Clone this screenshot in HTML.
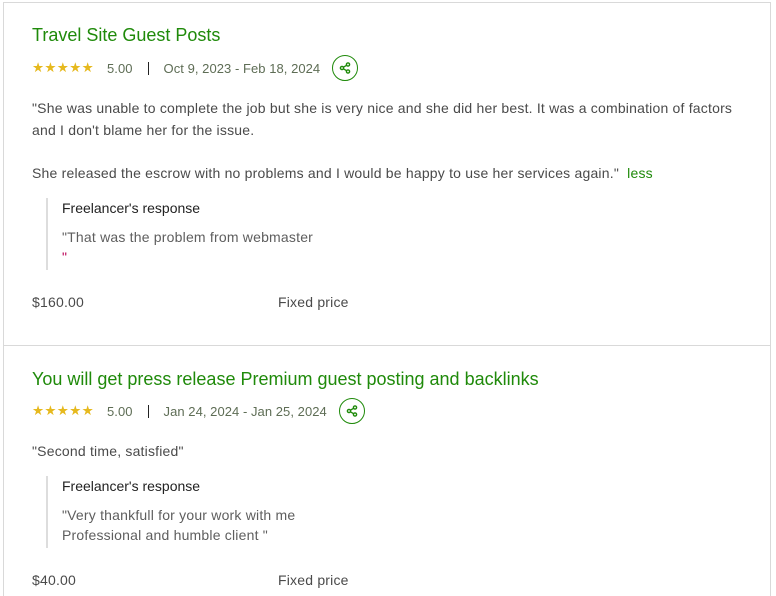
<!DOCTYPE html>
<html><head><style>
html,body{margin:0;background:#fff;font-family:"Liberation Sans",sans-serif;width:776px;height:596px;overflow:hidden;position:relative}
.box{position:absolute;left:3px;top:2px;width:766px;height:594px;border-left:1px solid #d9d9d9;border-right:1px solid #d9d9d9;border-top:1px solid #d9d9d9}
.sep{position:absolute;left:3px;width:767px;top:345px;height:1px;background:#d9d9d9}
.t{position:absolute;left:32px;color:#1f8a0a;font-size:18px}
.meta{position:absolute;left:32px;font-size:13px;color:#5e6d55;display:flex;align-items:center;letter-spacing:0.05px}
.stars{color:#e6b91e;font-size:13.5px;letter-spacing:0.3px;margin-right:13px}
.bar{width:1px;height:13px;background:#222;margin:0 15px}
.share{width:26px;height:26px;border:1.5px solid #1f8a0a;border-radius:50%;box-sizing:border-box;display:flex;align-items:center;justify-content:center;margin-left:12px}
.p{position:absolute;left:32px;font-size:14px;color:#4a4a4a;line-height:22px;letter-spacing:0.2px}
.resp{position:absolute;left:46px;border-left:2px solid #ddd;padding-left:14px}
.resp .h{font-size:14px;color:#222}
.resp .b{font-size:14px;color:#5e5e5e;line-height:20px;margin-top:11px;letter-spacing:0.2px}
.price{position:absolute;font-size:14px;color:#4a4a4a;letter-spacing:0.2px}
</style></head><body>
<div class="box"></div>
<div class="sep"></div>
<div class="t" style="top:25px">Travel Site Guest Posts</div>
<div class="meta" style="top:55px"><span class="stars">★★★★★</span>5.00<span class="bar"></span>Oct 9, 2023 - Feb 18, 2024<span class="share"><svg width="12" height="12" viewBox="0 0 12 12" fill="none" stroke="#1f8a0a" stroke-width="1.4"><circle cx="9" cy="2.5" r="1.6"/><circle cx="3" cy="6" r="1.6"/><circle cx="9" cy="9.5" r="1.6"/><path d="M4.4 5.2L7.6 3.3M4.4 6.8L7.6 8.7"/></svg></span></div>
<div class="p" style="top:97px">"She was unable to complete the job but she is very nice and she did her best. It was a combination of factors<br>and I don't blame her for the issue.</div>
<div class="p" style="top:162px">She released the escrow with no problems and I would be happy to use her services again."&nbsp; <span style="color:#1f8a0a">less</span></div>
<div class="resp" style="top:198px;height:72px"><div class="h" style="margin-top:2px">Freelancer's response</div><div class="b">"That was the problem from webmaster<br><span style="color:#b05">"</span></div></div>
<div class="price" style="left:32px;top:294px">$160.00</div>
<div class="price" style="left:278px;top:294px">Fixed price</div>

<div class="t" style="top:369px">You will get press release Premium guest posting and backlinks</div>
<div class="meta" style="top:398px"><span class="stars">★★★★★</span>5.00<span class="bar"></span>Jan 24, 2024 - Jan 25, 2024<span class="share"><svg width="12" height="12" viewBox="0 0 12 12" fill="none" stroke="#1f8a0a" stroke-width="1.4"><circle cx="9" cy="2.5" r="1.6"/><circle cx="3" cy="6" r="1.6"/><circle cx="9" cy="9.5" r="1.6"/><path d="M4.4 5.2L7.6 3.3M4.4 6.8L7.6 8.7"/></svg></span></div>
<div class="p" style="top:440px">"Second time, satisfied"</div>
<div class="resp" style="top:476px;height:72px"><div class="h" style="margin-top:2px">Freelancer's response</div><div class="b">"Very thankfull for your work with me<br>Professional and humble client "</div></div>
<div class="price" style="left:32px;top:572px">$40.00</div>
<div class="price" style="left:278px;top:572px">Fixed price</div>
</body></html>
